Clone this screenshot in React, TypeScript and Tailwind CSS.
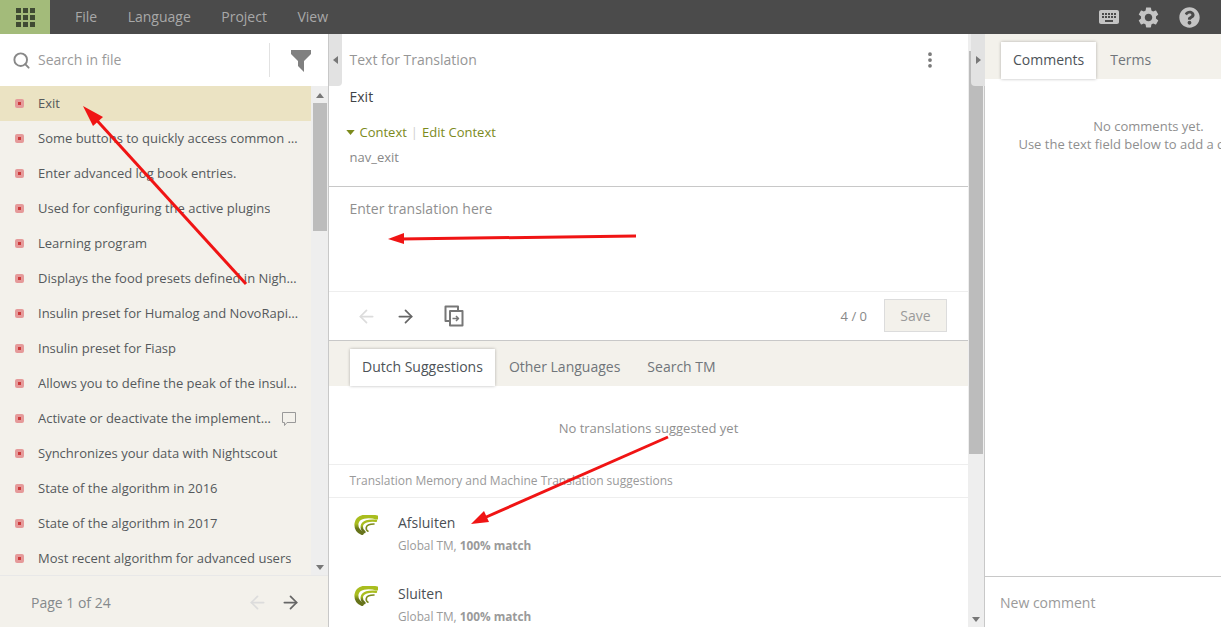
import { ArrowLeft, ArrowRight, MoreVertical, Search } from "lucide-react";
import { FaQuestionCircle } from "react-icons/fa";
import { MdKeyboard, MdSettings } from "react-icons/md";

const rows = [
  "Exit",
  "Some buttons to quickly access common functions",
  "Enter advanced log book entries.",
  "Used for configuring the active plugins",
  "Learning program",
  "Displays the food presets defined in Nightscout",
  "Insulin preset for Humalog and NovoRapid insulin",
  "Insulin preset for Fiasp",
  "Allows you to define the peak of the insulin action",
  "Activate or deactivate the implementation",
  "Synchronizes your data with Nightscout",
  "State of the algorithm in 2016",
  "State of the algorithm in 2017",
  "Most recent algorithm for advanced users",
];

function Caret({ dir }: { dir: "up" | "down" | "left" | "right" }) {
  const points = {
    up: "0,5 4,0 8,5",
    down: "0,0 8,0 4,5",
    left: "5,0 5,8 0,4",
    right: "0,0 0,8 5,4",
  }[dir];
  const size = dir === "up" || dir === "down" ? "h-[5px] w-2" : "h-2 w-[5px]";
  const box = dir === "up" || dir === "down" ? "0 0 8 5" : "0 0 5 8";
  return (
    <svg viewBox={box} className={size}>
      <polygon points={points} fill="#777" />
    </svg>
  );
}

function TmLogo({ id }: { id: string }) {
  return (
    <svg viewBox="0 0 24 20" className="h-5 w-6 shrink-0" fill="none" strokeLinecap="round">
      <defs>
        <linearGradient id={id} x1="0" y1="0" x2="0" y2="1">
          <stop offset="0.45" stopColor="#a9bd1e" />
          <stop offset="0.75" stopColor="#66731a" />
        </linearGradient>
      </defs>
      <path d="M23 2.500C14 0 3.500 1 2.500 8.500C2 13 4.500 16.500 8 18" stroke={`url(#${id})`} strokeWidth="4" />
      <path d="M22 5.800C15 5 8.500 6.500 7.800 11C7.500 13.500 8.500 15.500 10.500 17" stroke={`url(#${id})`} strokeWidth="2.400" />
      <path d="M20 9C16.500 9 12.800 10 12.300 12.500C12 14 12.800 15.500 14 16.200" stroke="#7c8a1c" strokeWidth="1.600" />
    </svg>
  );
}

function Tab({ label, active }: { label: string; active?: boolean }) {
  return (
    <div
      className={
        active
          ? "flex h-full items-center bg-white px-3 pb-[2px] text-[#4d5358] shadow-[0_0_3px_rgba(0,0,0,0.28)]"
          : "flex h-full items-center pb-[2px] pl-[14px] pr-[13px] text-[#70757a]"
      }
    >
      {label}
    </div>
  );
}

function Suggestion({ text }: { text: string }) {
  return (
    <div className="flex h-[71px] shrink-0 pl-[25px] pt-[15px]">
      <div className="w-[44px] pt-[2px]">
        <TmLogo id={`tm-${text}`} />
      </div>
      <div>
        <div className="text-sm leading-[19px] text-[#4a4f54]">{text}</div>
        <div className="mt-[5px] text-[11.8px] leading-4 text-[#9a9a9a]">
          Global TM, <span className="font-bold">100% match</span>
        </div>
      </div>
    </div>
  );
}

export default function App() {
  return (
    <div className="relative flex h-[627px] w-[1221px] flex-col overflow-hidden bg-white font-['Open_Sans',sans-serif]">
      <header className="flex h-[34px] shrink-0 items-center bg-[#4b4b4b] text-sm text-[#a8a8a8]">
        <div className="grid h-full w-[50px] place-items-center bg-[#a3bb7a]">
          <div className="grid grid-cols-3 gap-[2px]">
            {Array.from({ length: 9 }).map((_, i) => (
              <div key={i} className="h-[5px] w-[5px] bg-[#3f4a33]" />
            ))}
          </div>
        </div>
        <nav className="ml-[25px] flex gap-[30.5px]">
          <span>File</span>
          <span>Language</span>
          <span>Project</span>
          <span>View</span>
        </nav>
        <div className="ml-auto flex items-center pr-[21px] text-[#c4c4c4]">
          <MdKeyboard className="h-[24px] w-[24px]" />
          <MdSettings className="ml-[15px] h-[25px] w-[25px]" />
          <FaQuestionCircle className="ml-[18px] h-[21px] w-[21px]" />
        </div>
      </header>

      <div className="flex min-h-0 flex-1">
        {/* file strings */}
        <aside className="flex w-[329px] shrink-0 flex-col border-r border-[#c8c8c8] bg-[#f3f1eb]">
          <div className="flex h-[52px] shrink-0 items-center bg-white pl-[12px]">
            <Search className="h-[19px] w-[19px] text-[#888]" strokeWidth={2.4} />
            <span className="ml-[7px] text-sm text-[#9a9a9a]">Search in file</span>
            <div className="ml-auto mr-[21px] h-[34px] w-px bg-[#e2e2e2]" />
            <svg viewBox="0 0 20 24" className="mr-[17px] h-[24px] w-[20px]">
              <path d="M0 2H20V6L13 13V24L7 18V13L0 6Z" fill="#808080" />
            </svg>
          </div>
          <div className="flex min-h-0 flex-1">
            <div className="min-w-0 flex-1">
              {rows.map((row, i) => (
                <div
                  key={row}
                  className={
                    i === 0
                      ? "flex h-[35px] items-center bg-[#ebe3c3] pl-[15px] pr-[12px] text-[13px] text-[#55595c]"
                      : "flex h-[35px] items-center pl-[15px] pr-[12px] text-[13px] text-[#55595c]"
                  }
                >
                  <div className="mr-[14px] grid h-[9px] w-[9px] shrink-0 place-items-center rounded-[2px] bg-[#e59a9a]">
                    <div className="h-[3px] w-[3px] bg-[#cc3a3a]" />
                  </div>
                  <span className="truncate">{row}</span>
                  {i === 9 && (
                    <svg
                      viewBox="0 0 16 16"
                      className="ml-[9px] mr-[2px] h-4 w-4 shrink-0"
                      fill="none"
                      stroke="#999"
                    >
                      <path d="M1.500 1.500H14.500V11.500H6L3.500 14.500V11.500H1.500Z" />
                    </svg>
                  )}
                </div>
              ))}
            </div>
            <div className="flex w-[17px] shrink-0 flex-col items-center bg-[#eeeeee] pb-[5px] pt-[7px]">
              <Caret dir="up" />
              <div className="mt-[5px] h-[128px] w-[14px] bg-[#bcbcbc]" />
              <div className="mt-auto">
                <Caret dir="down" />
              </div>
            </div>
          </div>
          <div className="flex h-[52px] shrink-0 items-center border-t border-[#e8e8e8] pl-[31px] pr-[27px] pt-[2px] text-sm text-[#85898c]">
            <span>Page 1 of 24</span>
            <ArrowLeft className="ml-auto h-[21px] w-[21px] text-[#dcdcdc]" />
            <ArrowRight className="ml-[12px] h-[21px] w-[21px] text-[#666]" />
          </div>
        </aside>

        {/* editor */}
        <main className="relative flex w-[639px] shrink-0 flex-col text-sm">
          <div className="absolute left-0 top-0 z-10 grid h-[52px] w-[13px] place-items-center rounded-br-[4px] bg-[#e2e2e2]">
            <Caret dir="left" />
          </div>
          <section className="h-[153px] shrink-0 border-b border-[#c8c8c8] pl-[20.5px]">
            <div className="flex h-[52px] items-center justify-between pr-[28px] text-[#969696]">
              <span>Text for Translation</span>
              <MoreVertical className="h-[20px] w-[20px] text-[#777]" strokeWidth={2.5} />
            </div>
            <div className="mt-[1px] leading-[20px] text-[#3f4347]">Exit</div>
            <div className="mt-[16px] flex items-center text-[13px] leading-[18px] text-[#7c8a1c]">
              <svg viewBox="0 0 10 6" className="-ml-[4px] mr-[5px] h-[5px] w-[9px]">
                <polygon points="0,0 10,0 5,6" fill="#7c8a1c" />
              </svg>
              <span>Context</span>
              <span className="mx-[4px] text-[#cfcfcf]">|</span>
              <span>Edit Context</span>
            </div>
            <div className="mt-[7px] text-[13px] leading-[18px] text-[#888]">nav_exit</div>
          </section>
          <section className="h-[104px] shrink-0 pl-[20.5px] pt-[12px] text-[#8f8f8f]">Enter translation here</section>
          <section className="flex h-[49px] shrink-0 items-center border-t border-[#eeeeee] pl-[27px] pr-[21px]">
            <ArrowLeft className="h-[21px] w-[21px] text-[#dcdcdc]" />
            <ArrowRight className="ml-[18px] h-[21px] w-[21px] text-[#666]" />
            <svg
              viewBox="0 0 20 22"
              className="ml-[28px] h-[22px] w-[20px]"
              fill="none"
              stroke="#777"
              strokeWidth="2"
              strokeLinejoin="round"
            >
              <path d="M6 16H1.500V1.500H14V6" />
              <path d="M6 6H18.500V20.500H6Z" />
              <path d="M8.500 13.500H14M12 11L14.500 13.500L12 16" strokeWidth="1.500" />
            </svg>
            <span className="ml-auto mr-[17px] text-[13px] text-[#888]">4 / 0</span>
            <div className="mb-[2px] grid h-[33px] w-[63px] place-items-center border border-[#dcdcdc] bg-[#f3f1eb] pt-[1px] text-[#9a9a9a]">
              Save
            </div>
          </section>
          <div className="flex h-[46px] shrink-0 items-end border-t border-[#c8c8c8] bg-[#f3f1eb] pl-[21px]">
            <div className="flex h-[37px]">
              <Tab label="Dutch Suggestions" active />
              <Tab label="Other Languages" />
              <Tab label="Search TM" />
            </div>
          </div>
          <div className="flex h-[78px] shrink-0 items-center justify-center pt-[6px] text-[13px] text-[#8f8f8f]">
            No translations suggested yet
          </div>
          <div className="flex h-[34px] shrink-0 items-center border-y border-[#eeeeee] pl-[20.5px] text-xs text-[#9a9a9a]">
            Translation Memory and Machine Translation suggestions
          </div>
          <Suggestion text="Afsluiten" />
          <Suggestion text="Sluiten" />
        </main>

        <div className="flex w-[16px] shrink-0 flex-col items-center bg-[#eeeeee] pb-[5px] pt-[17px]">
          <div className="h-[403px] w-[14px] bg-[#bcbcbc]" />
          <div className="mt-auto">
            <Caret dir="down" />
          </div>
        </div>

        {/* comments */}
        <aside className="relative flex w-[328px] shrink-0 flex-col border-l border-[#c8c8c8] text-sm">
          <div className="absolute -left-[14px] top-0 z-10 grid h-[52px] w-[14px] place-items-center rounded-bl-[4px] bg-[#e2e2e2]">
            <Caret dir="right" />
          </div>
          <div className="flex h-[45px] shrink-0 items-end bg-[#f3f1eb] pl-[16px]">
            <div className="flex h-[37px]">
              <Tab label="Comments" active />
              <Tab label="Terms" />
            </div>
          </div>
          <div className="flex-1 pt-[38px] text-center text-[13px] leading-[18px] text-[#8f8f8f]">
            <div>No comments yet.</div>
            <div>Use the text field below to add a comment.</div>
          </div>
          <div className="flex h-[51px] shrink-0 items-center border-t border-[#c8c8c8] pl-[15px] pt-[2px] text-[#9a9a9a]">
            New comment
          </div>
        </aside>
      </div>

      {/* annotation arrows */}
      <svg className="pointer-events-none absolute inset-0 z-20 h-full w-full" viewBox="0 0 1221 627">
        <g stroke="#f01414" strokeWidth="3" fill="#f01414">
          <line x1="246" y1="284" x2="92" y2="115" />
          <line x1="636" y1="236" x2="400" y2="239" />
          <line x1="668" y1="437" x2="484" y2="518" />
        </g>
        <g fill="#f01414">
          <polygon points="83,106 103,117 93,126" />
          <polygon points="388,239 404,233 404,244" />
          <polygon points="471,524 484,511 489,522" />
        </g>
      </svg>
    </div>
  );
}
